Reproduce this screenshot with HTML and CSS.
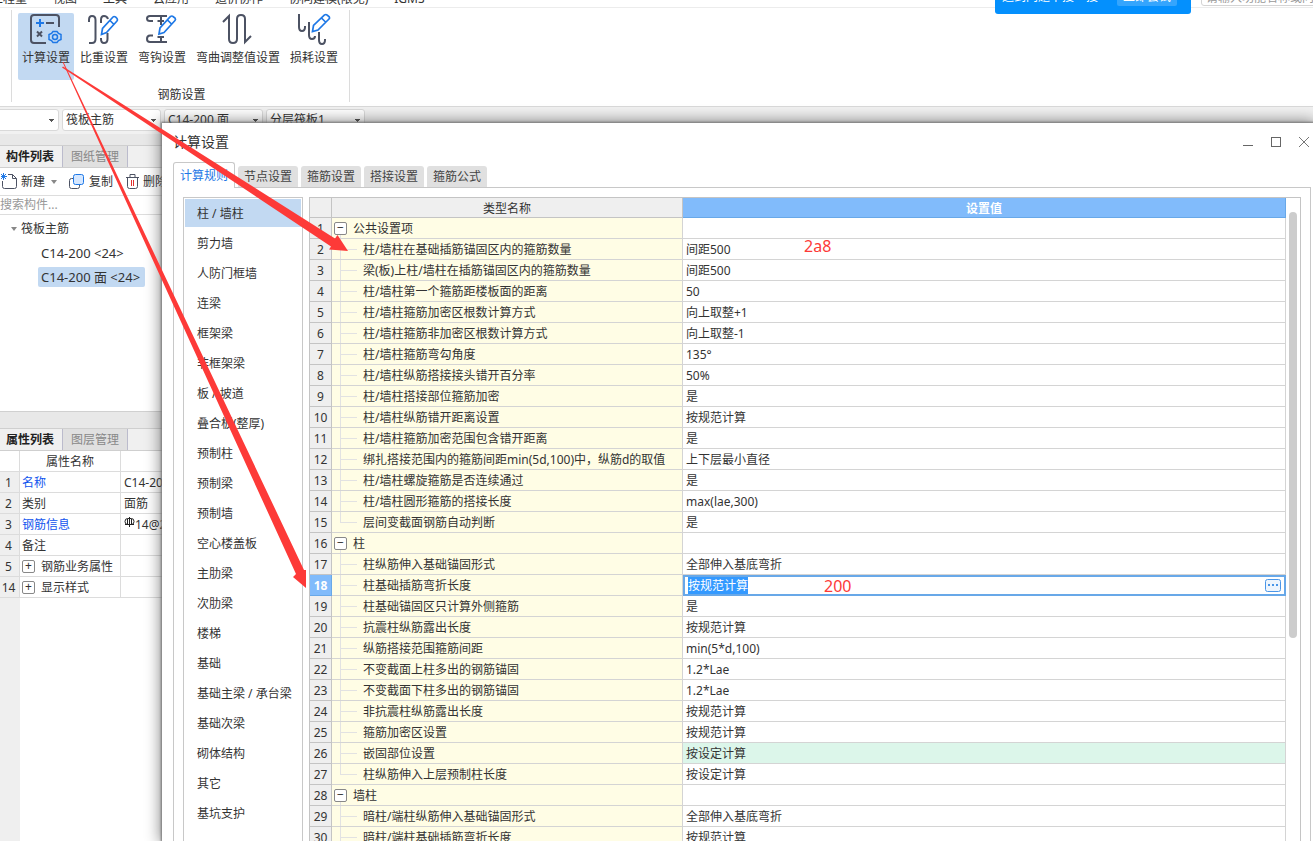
FILE: index.html
```html
<!DOCTYPE html>
<html lang="zh-CN">
<head>
<meta charset="utf-8">
<title>计算设置</title>
<link rel="stylesheet" href="styles.css">
</head>
<body>
<div class="app">
  <header class="topbar">
    <nav class="menu">
      <a href="#">工程量</a><a href="#">视图</a><a href="#">工具</a><a href="#">云应用</a><a href="#">造价协作</a><a href="#">协同建模(限免)</a><a href="#">IGMS</a>
    </nav>
    <div class="promo"><span>遇到问题下搜一搜</span><button type="button">立即尝试</button></div>
    <input class="find" type="text" aria-label="功能搜索" placeholder="请输入功能名称或问题">
  </header>

  <section class="ribbon">
    <div class="group">
      <div class="tools">
        <button type="button" class="tool active">
          <svg width="34" height="34" viewBox="0 0 34 34" fill="none" stroke="#4c5263" stroke-width="2"><path d="M17 30H5Q2 30 2 27V5Q2 2 5 2H27Q30 2 30 5V14"/><path d="M17 10H25M8 18.500L13 23.500M13 18.500L8 23.500"/><path stroke="#1e78e6" d="M7 10H15M11 6V14"/><g stroke="#1e78e6" stroke-width="1.500"><path d="M24 18.500H28L29.500 20.500L32 21.500V26.500L29.500 27.500L28 29.500H24L22.500 27.500L20 26.500V21.500L22.500 20.500Z"/><circle cx="26" cy="24" r="2.500"/></g></svg>
          <span>计算设置</span></button>
        <button type="button" class="tool">
          <svg width="34" height="34" viewBox="0 0 34 34" fill="none" stroke="#4c5263" stroke-width="2"><path d="M2 9V7Q2 3 5 3Q8.500 3 8.500 7V26Q8.500 30 5 30H2M14 10V7Q14 3 17 3Q20 3 21 6M20.500 20V26Q20.500 30 17 30Q14 30 14 26V25"/><path stroke="#1e78e6" stroke-width="1.700" d="M14.500 21.500L15.500 15.500L26 4Q27 3 28.500 4L30 5.500Q31 7 30 8L19.500 19.500ZM23 7.500L27 11.500"/></svg>
          <span>比重设置</span></button>
        <button type="button" class="tool">
          <svg width="34" height="34" viewBox="0 0 34 34" fill="none" stroke="#4c5263" stroke-width="2"><path d="M22 3H5Q2 3 2 5.500Q2 8 5 8H8M16 3V12M12.500 8H19M22 29H5Q2 29 2 26Q2 22.500 5 22.500H8M16 24V29M12.500 24H19"/><path stroke="#1e78e6" stroke-width="1.700" d="M14 21L15 15L25.500 3.500Q27 2.500 28 3.500L30 5Q31 6.500 30 7.500L19 19.500ZM22.500 7L26.500 11"/></svg>
          <span>弯钩设置</span></button>
        <button type="button" class="tool">
          <svg width="34" height="34" viewBox="0 0 34 34" fill="none" stroke="#4c5263" stroke-width="2"><path d="M2 9L8 3V26Q8 30 12 30Q16 30 16 26V6Q16 2 20 2Q24 2 24 6V29L30 23"/></svg>
          <span>弯曲调整值设置</span></button>
        <button type="button" class="tool">
          <svg width="34" height="34" viewBox="0 0 34 34" fill="none" stroke="#4c5263" stroke-width="2"><path d="M2 1V14Q2 18 5 18Q8 18 8 14V13M12 9V22Q12 26 15 26Q18 26 18 23M22 19V27Q22 31 25 31Q28 31 28 27V26"/><path stroke="#1e78e6" stroke-width="1.700" d="M15.500 18.500L16.500 12.500L27.500 2Q29 1 30 2L32 3.500Q33 5 32 6L21 17ZM24.500 5L28.500 9"/></svg>
          <span>损耗设置</span></button>
      </div>
      <div class="group-name">钢筋设置</div>
    </div>
  </section>

  <section class="selectors">
    <select aria-label="楼层"><option></option></select>
    <select aria-label="构件类别"><option>筏板主筋</option></select>
    <select aria-label="构件"><option>C14-200 面</option></select>
    <select aria-label="分层"><option>分层筏板1</option></select>
  </section>

  <aside class="side">
    <section class="pane components">
      <div class="tabs"><button type="button" class="on">构件列表</button><button type="button">图纸管理</button></div>
      <div class="actions">
        <button type="button"><svg width="17" height="17" viewBox="0 0 17 17" fill="none" stroke="#4c5263"><path d="M7 1.500H11.500L15.500 5.500V13.500Q15.500 15.500 13.500 15.500H3.500Q1.500 15.500 1.500 13.500V8"/><path d="M11.500 1.500V5.500H15.500"/><path stroke="#1e78e6" d="M0 1L5 6M5 1L0 6M2.500 0V7M0 3.500H6"/></svg>新建<i class="caret"></i></button>
        <button type="button"><svg width="17" height="17" viewBox="0 0 17 17" fill="none" stroke="#4c5263"><path d="M4 5.500H2.500Q.5 5.500 .5 7.500V13.500Q.5 15.500 2.500 15.500H8.500Q10.500 15.500 10.500 13.500V12"/><rect x="4.500" y="1.500" width="10" height="10" rx="2" fill="#d5e7ff" stroke="#1e78e6"/></svg>复制</button>
        <button type="button"><svg width="15" height="17" viewBox="0 0 15 17" fill="none" stroke="#4c5263"><path d="M1 4.500H14M5 4V1.500H10V4M2.500 4.500V13.500Q2.500 15.500 4.500 15.500H10.500Q12.500 15.500 12.500 13.500V4.500"/><path stroke="#e03030" d="M6.500 7V13M8.500 7V13"/></svg>删除</button>
      </div>
      <input class="filter" type="text" aria-label="搜索构件" placeholder="搜索构件...">
      <ul class="tree">
        <li><i class="caret"></i>筏板主筋</li>
        <li class="leaf"><span>C14-200 &lt;24&gt;</span></li>
        <li class="leaf"><span class="sel">C14-200 面 &lt;24&gt;</span></li>
      </ul>
    </section>
    <section class="pane props">
      <div class="tabs"><button type="button" class="on">属性列表</button><button type="button">图层管理</button></div>
      <div class="props-body">
      <table>
        <thead><tr><th></th><th>属性名称</th><th></th></tr></thead>
        <tbody>
        <tr><td>1</td><td class="blue">名称</td><td>C14-200 面</td></tr>
        <tr><td>2</td><td>类别</td><td>面筋</td></tr>
        <tr><td>3</td><td class="blue">钢筋信息</td><td><svg width="11" height="12" viewBox="0 0 11 12" fill="none" stroke="#222"><path d="M5.500 0V10M3.500 2V7M7.500 2V7M1 7.500H10M3.500 1.500H7.500Q10 1.500 10 4.500Q10 7.500 7.500 7.500M3.500 1.500Q1 1.500 1 4.500Q1 7.500 3.500 7.500"/></svg>14@200</td></tr>
        <tr><td>4</td><td>备注</td><td></td></tr>
        <tr><td>5</td><td><button type="button" class="fold" aria-label="展开">+</button>钢筋业务属性</td><td></td></tr>
        <tr><td>14</td><td><button type="button" class="fold" aria-label="展开">+</button>显示样式</td><td></td></tr>
        </tbody>
      </table>
      </div>
    </section>
  </aside>
</div>

<div class="dialog" role="dialog" aria-labelledby="dlg-title">
  <header class="titlebar">
    <h1 id="dlg-title">计算设置</h1>
    <div class="winbtns">
      <button type="button" aria-label="最小化"><svg width="12" height="12" viewBox="0 0 12 12" fill="none" stroke="#666"><path d="M1 9.500H11"/></svg></button>
      <button type="button" aria-label="最大化"><svg width="12" height="12" viewBox="0 0 12 12" fill="none" stroke="#666"><rect x="1.500" y="1.500" width="9" height="9"/></svg></button>
      <button type="button" aria-label="关闭"><svg width="12" height="12" viewBox="0 0 12 12" fill="none" stroke="#777"><path d="M1 1L11 11M11 1L1 11"/></svg></button>
    </div>
  </header>
  <div class="dtabs">
    <button type="button" class="on">计算规则</button><button type="button">节点设置</button><button type="button">箍筋设置</button><button type="button">搭接设置</button><button type="button">箍筋公式</button>
  </div>
  <div class="panel">
    <nav class="cats">
      <button type="button" class="on">柱 / 墙柱</button>
      <button type="button">剪力墙</button>
      <button type="button">人防门框墙</button>
      <button type="button">连梁</button>
      <button type="button">框架梁</button>
      <button type="button">非框架梁</button>
      <button type="button">板 / 坡道</button>
      <button type="button">叠合板(整厚)</button>
      <button type="button">预制柱</button>
      <button type="button">预制梁</button>
      <button type="button">预制墙</button>
      <button type="button">空心楼盖板</button>
      <button type="button">主肋梁</button>
      <button type="button">次肋梁</button>
      <button type="button">楼梯</button>
      <button type="button">基础</button>
      <button type="button">基础主梁 / 承台梁</button>
      <button type="button">基础次梁</button>
      <button type="button">砌体结构</button>
      <button type="button">其它</button>
      <button type="button">基坑支护</button>
    </nav>
    <div class="gridbox">
      <table class="rules">
        <colgroup><col class="c-num"><col class="c-name"><col></colgroup>
        <thead><tr><th></th><th>类型名称</th><th class="hot">设置值</th></tr></thead>
        <tbody>
        <tr class="grp"><td>1</td><td><button type="button" class="fold" aria-label="折叠">−</button>公共设置项</td><td></td></tr>
        <tr><td>2</td><td>柱/墙柱在基础插筋锚固区内的箍筋数量</td><td>间距500</td></tr>
        <tr><td>3</td><td>梁(板)上柱/墙柱在插筋锚固区内的箍筋数量</td><td>间距500</td></tr>
        <tr><td>4</td><td>柱/墙柱第一个箍筋距楼板面的距离</td><td>50</td></tr>
        <tr><td>5</td><td>柱/墙柱箍筋加密区根数计算方式</td><td>向上取整+1</td></tr>
        <tr><td>6</td><td>柱/墙柱箍筋非加密区根数计算方式</td><td>向上取整-1</td></tr>
        <tr><td>7</td><td>柱/墙柱箍筋弯勾角度</td><td>135°</td></tr>
        <tr><td>8</td><td>柱/墙柱纵筋搭接接头错开百分率</td><td>50%</td></tr>
        <tr><td>9</td><td>柱/墙柱搭接部位箍筋加密</td><td>是</td></tr>
        <tr><td>10</td><td>柱/墙柱纵筋错开距离设置</td><td>按规范计算</td></tr>
        <tr><td>11</td><td>柱/墙柱箍筋加密范围包含错开距离</td><td>是</td></tr>
        <tr><td>12</td><td>绑扎搭接范围内的箍筋间距min(5d,100)中，纵筋d的取值</td><td>上下层最小直径</td></tr>
        <tr><td>13</td><td>柱/墙柱螺旋箍筋是否连续通过</td><td>是</td></tr>
        <tr><td>14</td><td>柱/墙柱圆形箍筋的搭接长度</td><td>max(lae,300)</td></tr>
        <tr class="last"><td>15</td><td>层间变截面钢筋自动判断</td><td>是</td></tr>
        <tr class="grp"><td>16</td><td><button type="button" class="fold" aria-label="折叠">−</button>柱</td><td></td></tr>
        <tr><td>17</td><td>柱纵筋伸入基础锚固形式</td><td>全部伸入基底弯折</td></tr>
        <tr class="edit"><td>18</td><td>柱基础插筋弯折长度</td><td><div class="editor"><input id="cell" type="text" aria-label="柱基础插筋弯折长度" value="按规范计算"><button type="button" aria-label="更多"><svg width="16" height="14" viewBox="0 0 16 14" fill="none" stroke="#4a96e8"><rect x=".5" y=".5" width="15" height="12" rx="2" fill="#eef5fd"/><path stroke-width="2" d="M3 6H5M7 6H9M11 6H13"/></svg></button></div></td></tr>
        <tr><td>19</td><td>柱基础锚固区只计算外侧箍筋</td><td>是</td></tr>
        <tr><td>20</td><td>抗震柱纵筋露出长度</td><td>按规范计算</td></tr>
        <tr><td>21</td><td>纵筋搭接范围箍筋间距</td><td>min(5*d,100)</td></tr>
        <tr><td>22</td><td>不变截面上柱多出的钢筋锚固</td><td>1.2*Lae</td></tr>
        <tr><td>23</td><td>不变截面下柱多出的钢筋锚固</td><td>1.2*Lae</td></tr>
        <tr><td>24</td><td>非抗震柱纵筋露出长度</td><td>按规范计算</td></tr>
        <tr><td>25</td><td>箍筋加密区设置</td><td>按规范计算</td></tr>
        <tr class="changed"><td>26</td><td>嵌固部位设置</td><td>按设定计算</td></tr>
        <tr class="last"><td>27</td><td>柱纵筋伸入上层预制柱长度</td><td>按设定计算</td></tr>
        <tr class="grp"><td>28</td><td><button type="button" class="fold" aria-label="折叠">−</button>墙柱</td><td></td></tr>
        <tr><td>29</td><td>暗柱/端柱纵筋伸入基础锚固形式</td><td>全部伸入基底弯折</td></tr>
        <tr><td>30</td><td>暗柱/端柱基础插筋弯折长度</td><td>按规范计算</td></tr>
        </tbody>
      </table>
      <div class="track"><div class="thumb"></div></div>
    </div>
  </div>
</div>

<svg class="marks" width="360" height="600" viewBox="0 0 360 600" fill="#fd3a38" aria-hidden="true">
  <path d="M62 67.500L331 246.500L329 249.500L348 251L337.500 235L335 238.500L63 66.500Z"/>
  <path d="M62.500 62L296 574L293 577L306 588V570L304 570L63.500 62Z"/>
</svg>
<span class="note note-a">2a8</span>
<span class="note note-b">200</span>
<script src="script.js"></script>
</body>
</html>
```
FILE: styles.css
```css
* { box-sizing: border-box; }
body {
  margin: 0;
  height: 100vh;
  overflow: hidden;
  position: relative;
  background: #fff;
  color: #333;
  font: 12px/20px "Noto Sans", "Noto Sans CJK SC", sans-serif;
}
button, input, select { font: inherit; color: inherit; }
button { border: 0; padding: 0; background: none; white-space: nowrap; }
svg { flex: none; }
table { border-collapse: separate; border-spacing: 0; }

.app { height: 100%; display: flex; flex-direction: column; }

/* top menu, scrolled partly out of view */
.topbar {
  height: 8px;
  display: flex;
  align-items: flex-end;
  border-bottom: 1px solid #ececec;
  flex: none;
}
.menu { display: flex; gap: 26px; margin: 0 auto 0 -9px; }
.menu a { color: #333; text-decoration: none; white-space: nowrap; height: 18px; }
.promo {
  height: 28px;
  width: 196px;
  margin: 0 10px -7px 0;
  padding: 0 14px 8px 7px;
  display: flex;
  align-items: flex-end;
  justify-content: space-between;
  border-radius: 3px;
  background: #0490fd;
  color: #fff;
  white-space: nowrap;
}
.promo span { line-height: 18px; }
.promo button { background: #35a5fd; border-radius: 2px; padding: 0 6px; height: 18px; line-height: 18px; }
.find { width: 160px; height: 19px; margin: 0 -48px 1px 0; padding: 2px 4px 0; line-height: 15px; border: 1px solid #d4d4d4; border-radius: 3px; }
.find::placeholder, .filter::placeholder { color: #999; }

.ribbon { height: 98px; flex: none; padding: 2px 0 4px 11px; display: flex; }
.group { border: solid #dcdcdc; border-width: 0 1px; padding: 3px 7px 0 6px; display: flex; flex-direction: column; align-items: center; }
.tools { display: flex; gap: 2px; margin-bottom: 5px; }
.tool { height: 67px; padding: 0 4px; display: flex; flex-direction: column; align-items: center; border-radius: 2px; }
.tool span { line-height: 20px; padding-top: 1px; }
.tool.active { background: #c2d9f2; }
.group-name { line-height: 20px; padding-left: 3px; }

.selectors { height: 28px; flex: none; display: flex; gap: 3px; padding: 2px 0; background: #f1f1f1; border-top: 1px solid #d9d9d9; }
.selectors select {
  width: 99px; height: 22px; padding: 0 3px; border: 1px solid #d9d9d9; border-radius: 3px;
  appearance: none;
  background: linear-gradient(#555, #555) no-repeat 88px 9px / 5px 1px, linear-gradient(#555, #555) no-repeat 89px 10px / 3px 1px, linear-gradient(#555, #555) no-repeat 90px 11px / 1px 1px, #fff;
}
.selectors select:first-child { margin-left: -40px; }

.side { width: 300px; flex: 1; min-height: 0; display: flex; flex-direction: column; background: #e8e8e8; padding-top: 11px; gap: 16px; }
.pane { background: #fff; display: flex; flex-direction: column; }
.components { height: 267px; border-bottom: 1px solid #d0d0d0; }
.props { flex: 1; min-height: 0; }
.tabs { display: flex; background: #f0f0f0; height: 23px; flex: none; border: solid #cfcfcf; border-width: 1px 0; }
.tabs button { width: 65px; border-right: 1px solid #bbc; background: #e0e0e0; color: #888; }
.tabs .on { width: 63px; padding-right: 2px; background: #f0f0f0; color: #222; font-weight: bold; }
.actions { display: flex; gap: 12px; height: 28px; flex: none; align-items: center; padding-left: 1px; border-bottom: 1px solid #ddd; }
.actions button { display: flex; align-items: center; gap: 3px; line-height: 22px; }
.caret { border: solid transparent; border-width: 4px 3px 0; border-top-color: #888; }
.actions .caret { margin-left: 3px; }
.filter { height: 19px; flex: none; border: 0; border-bottom: 1px solid #ddd; padding: 0; outline: 0; }
.tree { list-style: none; margin: 0; padding: 2px 0; }
.tree li { height: 24px; display: flex; align-items: center; gap: 4px; padding-left: 11px; }
.tree .leaf { padding-left: 38px; font-size: 13px; }
.leaf span { padding: 0 5px 0 3px; border-radius: 2px; }
.leaf .sel { background: #c2d9f2; }

.props-body { flex: 1; background: linear-gradient(90deg, #efefef 20px, #fff 20px); }
.props table { width: 100%; table-layout: fixed; }
.props th, .props td { height: 21px; padding: 2px 2px 0; line-height: 18px; border: solid #dcdcdc; border-width: 0 1px 1px 0; font-weight: normal; white-space: nowrap; }
.props td:last-child { padding-left: 3px; }
.props tr > :first-child { width: 20px; padding: 2px 2px 0 0; text-align: center; background: #efefef; }
.props tr > :nth-child(2) { width: 101px; }
.props thead th:first-child { background: #fff; }
.props .blue { color: #1155ee; }
.fold { width: 13px; height: 13px; margin-right: 6px; border: 1px solid #888; border-radius: 2px; line-height: 10px; background: #fff; vertical-align: 1px; }

/* dialog floats above the main window and runs past its right and bottom edges */
.dialog {
  position: absolute;
  inset: 123px 0 0 162px;
  display: flex;
  flex-direction: column;
  background: #fff;
  box-shadow: 0 0 2px 1px #777, 0 0 14px 2px rgba(0, 0, 0, .45);
  padding: 0 2px 0 11px;
}
.titlebar { display: flex; justify-content: space-between; align-items: center; height: 37px; margin-bottom: 2px; flex: none; margin-right: -2px; }
h1 { margin: 0; font-size: 14px; font-weight: normal; }
.winbtns { display: flex; gap: 16px; padding-right: 3px; }
.winbtns button { width: 12px; height: 20px; display: flex; align-items: center; }
.dtabs { display: flex; gap: 3px; align-items: flex-end; height: 26px; flex: none; margin-bottom: -1px; }
.dtabs button { width: 60px; height: 21px; margin-bottom: 1px; border-radius: 3px 3px 0 0; background: #e0e0e0; color: #444; }
.dtabs .on { width: 62px; height: 26px; margin-bottom: 0; border: 1px solid #c8c8c8; border-bottom: 0; background: #fff; color: #1e78e6; position: relative; }
.panel { flex: 1; min-height: 0; display: flex; gap: 6px; border: 1px solid #c8c8c8; border-bottom: 0; padding: 9px 9px 0 9px; }
.cats { width: 120px; flex: none; border: 1px solid #c8c8c8; border-bottom: 0; padding: 1px; display: flex; flex-direction: column; gap: 2px; overflow: hidden; }
.cats button { height: 28px; flex: none; padding: 2px 0 0 12px; text-align: left; }
.cats .on { background: #c2d9f2; }
.gridbox { flex: 1; min-width: 0; display: flex; overflow: hidden; border: solid #c4c4c4; border-width: 1px 1px 0; }
.rules { flex: 1; min-width: 0; table-layout: fixed; align-self: flex-start; }
.c-num { width: 22px; }
.c-name { width: 351px; }
.rules th { height: 20px; padding: 2px 0 0; line-height: 17px; font-weight: normal; background: #efefef; border: solid #c4c4c4; border-width: 0 1px 1px 0; }
.rules .hot { background: #81bbfb; color: #fff; font-weight: bold; border-color: #68a8e8; }
.rules td { height: 21px; padding: 2px 3px 0; line-height: 18px; border: solid #d4d4d4; border-width: 0 1px 1px 0; white-space: nowrap; overflow: hidden; }
.rules td:first-child { padding: 2px 0 0; text-align: center; background: #efefef; border-color: #c4c4c4; }
.rules td:nth-child(2) {
  padding-left: 31px;
  background: linear-gradient(#e2e2e2, #e2e2e2) no-repeat 8px 0 / 1px 100%, linear-gradient(#e2e2e2, #e2e2e2) no-repeat 8px 10px / 17px 1px, #fffde5;
}
.rules .last td:nth-child(2) { background-size: 1px 10px, 17px 1px, auto; }
.rules .grp td:nth-child(2) { padding-left: 2px; background: linear-gradient(#e2e2e2, #e2e2e2) no-repeat 8px 16px / 1px 4px, #fffde5; }
.rules .changed td:last-child { background: #dcf6ea; }
.rules .edit td:first-child { background: #81bbfb; color: #fff; font-weight: bold; border-color: #68a8e8; }
.rules .edit td:last-child { padding: 0; border: 0; }
.editor { display: flex; align-items: center; height: 21px; border: 2px solid #68a8e8; padding-right: 3px; }
.editor input { flex: 1; min-width: 0; height: 17px; border: 0; padding: 0 3px; outline: 0; }
.editor input::selection { background: #3399ff; color: #fff; }
.editor button { height: 14px; display: flex; }
.track { width: 14px; flex: none; padding: 14px 3px 0; }
.thumb { width: 8px; height: 426px; border-radius: 4px; background: #ccc; }

/* red annotations lying over both windows */
.marks { position: absolute; left: 0; top: 0; pointer-events: none; }
.note { position: absolute; color: #fd3a38; font-size: 16px; }
.note-a { left: 804px; top: 236px; }
.note-b { left: 824px; top: 576px; }
```
FILE: script.js
```js
const cell = document.getElementById('cell');
cell.focus({ preventScroll: true });
cell.select();
```
